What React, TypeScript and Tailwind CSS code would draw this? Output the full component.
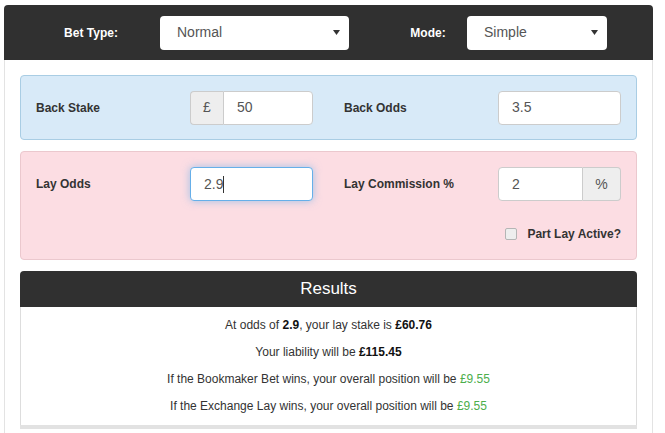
const font = { fontFamily: '"Liberation Sans", Arial, sans-serif' };

const Caret = () => (
    <svg width="7" height="5" viewBox="0 0 7 5" className="shrink-0">
        <path d="M0 0 L7 0 L3.5 5 Z" fill="#333" />
    </svg>
);

const SelectBox = ({ value, width }: any) => (
    <div className={`${width} h-[34px] bg-white rounded-[4px] flex items-center justify-between pl-[17px] pr-[9px] text-[14px] text-[#555]`}>
        <span>{value}</span>
        <Caret />
    </div>
);

const Label = ({ children }: any) => (
    <div className="w-[154px] text-[12px] font-bold text-[#333]">{children}</div>
);

const Addon = ({ children, side }: any) => (
    <div
        className={`h-[34px] flex items-center justify-center bg-[#eeeeee] border border-[#cccccc] text-[14px] text-[#555] ${
            side === "left" ? "w-[33px] rounded-l-[4px] border-r-0" : "w-[38px] rounded-r-[4px] border-l-0"
        }`}
    >
        {children}
    </div>
);

const Field = ({ value, width, rounded }: any) => (
    <div className={`${width} h-[34px] bg-white border border-[#cccccc] ${rounded} flex items-center pl-[13px] text-[14px] text-[#555]`}>
        {value}
    </div>
);

export default function App() {
    return (
        <div className="w-[665px] h-[433px] bg-white overflow-hidden pt-[5px] pl-[4px]" style={font}>
            <div className="w-[649px] h-[428px] flex flex-col">
                {/* top bar */}
                <div className="h-[55px] bg-[#303030] rounded-t-[4px] flex items-center shrink-0">
                    <div className="w-[156px] pl-[18px] text-center text-[12px] font-bold text-white">Bet Type:</div>
                    <SelectBox value="Normal" width="w-[189px]" />
                    <div className="w-[118px] pl-[40px] text-center text-[12px] font-bold text-white">Mode:</div>
                    <SelectBox value="Simple" width="w-[140px]" />
                </div>

                <div className="flex-1 border-x border-[#e3e3e3] px-[15px] pt-[15px] flex flex-col">
                    {/* back */}
                    <div className="h-[65px] bg-[#d8eaf8] border border-[#a9cde4] rounded-[4px] px-[15px] flex items-center">
                        <Label>Back Stake</Label>
                        <div className="flex w-[123px]">
                            <Addon side="left">£</Addon>
                            <Field value="50" width="w-[90px]" rounded="rounded-r-[4px]" />
                        </div>
                        <div className="w-[31px]" />
                        <Label>Back Odds</Label>
                        <Field value="3.5" width="w-[123px]" rounded="rounded-[4px]" />
                    </div>

                    {/* lay */}
                    <div className="mt-[11px] h-[109px] bg-[#fcdde3] border border-[#ebc8ce] rounded-[4px] px-[15px] pt-[15px] flex flex-col">
                        <div className="flex items-center">
                            <Label>Lay Odds</Label>
                            <div className="w-[123px] h-[34px] bg-white border border-[#66afe9] rounded-[4px] shadow-[0_0_8px_rgba(102,175,233,0.6)] flex items-center pl-[13px] text-[14px] text-[#555]">
                                2.9<span className="w-px h-[17px] bg-[#333]" />
                            </div>
                            <div className="w-[31px]" />
                            <Label>Lay Commission %</Label>
                            <div className="flex w-[123px]">
                                <Field value="2" width="w-[85px]" rounded="rounded-l-[4px]" />
                                <Addon side="right">%</Addon>
                            </div>
                        </div>
                        <div className="mt-[21px] h-[23px] flex items-center justify-end">
                            <div className="w-[12px] h-[12px] rounded-[2px] border border-[#b5b5b5] bg-[#eeeeee] mr-[10px]" />
                            <span className="text-[12px] font-bold text-[#333]">Part Lay Active?</span>
                        </div>
                    </div>

                    {/* results */}
                    <div className="mt-[11px] flex flex-col">
                        <div className="h-[36px] bg-[#303030] rounded-t-[4px] flex items-center justify-center text-[17px] text-white">
                            Results
                        </div>
                        <div className="bg-white border-x border-[#dddddd] pt-[5px] pb-[5px] text-[12px] text-[#333] text-center">
                            <p className="h-[27px] leading-[27px]">
                                At odds of <b className="text-[#111]">2.9</b>, your lay stake is <b className="text-[#111]">£60.76</b>
                            </p>
                            <p className="h-[27px] leading-[27px]">
                                Your liability will be <b className="text-[#111]">£115.45</b>
                            </p>
                            <p className="h-[27px] leading-[27px]">
                                If the Bookmaker Bet wins, your overall position will be <span className="text-[#4cae4c]">£9.55</span>
                            </p>
                            <p className="h-[27px] leading-[27px]">
                                If the Exchange Lay wins, your overall position will be <span className="text-[#4cae4c]">£9.55</span>
                            </p>
                        </div>
                        <div className="h-[4px] bg-[#e2e2e2]" />
                    </div>
                </div>
            </div>
        </div>
    );
}
